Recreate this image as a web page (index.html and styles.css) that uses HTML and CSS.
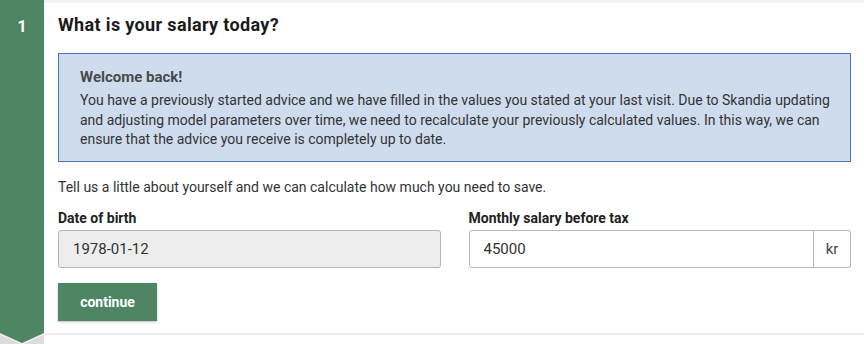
FILE: index.html
```html
<!DOCTYPE html>
<html lang="en">
<head>
<meta charset="utf-8">
<link rel="stylesheet" href="styles.css">
</head>
<body>
<div class="step">
  <div class="rail"><span class="num">1</span></div>
  <div class="main">
    <h1 class="title">What is your salary today?</h1>
    <div class="notice">
      <div class="notice-title">Welcome back!</div>
      <p class="notice-text">You have a previously started advice and we have filled in the values you stated at your last visit. Due to Skandia updating and adjusting model parameters over time, we need to recalculate your previously calculated values. In this way, we can ensure that the advice you receive is completely up to date.</p>
    </div>
    <p class="intro">Tell us a little about yourself and we can calculate how much you need to save.</p>
    <div class="fields">
      <div class="field">
        <label class="label">Date of birth</label>
        <div class="input disabled">1978-01-12</div>
      </div>
      <div class="field">
        <label class="label">Monthly salary before tax</label>
        <div class="input-group">
          <div class="input grow">45000</div>
          <div class="addon">kr</div>
        </div>
      </div>
    </div>
    <button class="btn">continue</button>
  </div>
  <div class="rail-foot">
    <svg width="44" height="11" viewBox="0 0 44 11"><polyline points="0,1 22,11 44,1" fill="none" stroke="#f2f2f2" stroke-width="1.2"/><polygon points="0,0 44,0 22,10" fill="#4e8563"/></svg>
  </div>
  <div class="foot"></div>
</div>
</body>
</html>
```
FILE: styles.css
```css
* { box-sizing: border-box; }
html, body { margin: 0; padding: 0; background: #fff; }
body { font-family: Roboto, "Liberation Sans", Arial, sans-serif; color: #333; font-size: 14px; width: 864px; height: 344px; overflow: hidden; }
.step { display: grid; grid-template-columns: 44px 1fr; grid-template-rows: 333px 11px; }
.rail { background: #4e8563; display: flex; justify-content: center; padding-top: 17px; }
.num { color: #fff; font-weight: 700; font-size: 16px; line-height: 20px; }
.main { border-top: 3px solid #f3f3f7; padding: 11px 13px 0 14px; }
.title { margin: 0; font-size: 18px; font-weight: 700; line-height: 22px; color: #1b1b1b; letter-spacing: 0.35px; }
.notice { margin-top: 17px; background: #cfdcee; border: 1px solid #4a76b8; padding: 13px 20px 11px 21px; }
.notice-title { font-weight: 700; color: #4a4a4a; line-height: 20px; font-size: 15px; }
.notice-text { margin: 4px 0 0; line-height: 19.5px; color: #333; }
.intro { margin: 15px 0 0; line-height: 20px; color: #333; }
.fields { display: grid; grid-template-columns: 1fr 1fr; gap: 28px; margin-top: 11px; }
.field { display: flex; flex-direction: column; }
.label { font-weight: 700; color: #222; line-height: 20px; margin-bottom: 2px; }
.input { height: 38px; border: 1px solid #b5b5b5; border-radius: 3px; padding: 0 14px; display: flex; align-items: center; color: #333; background: #fff; font-size: 15px; }
.input.disabled { background: #ededed; }
.input-group { display: flex; }
.input.grow { flex: 1; border-radius: 3px 0 0 3px; }
.addon { width: 37px; height: 38px; border: 1px solid #b5b5b5; border-left: none; border-radius: 0 3px 3px 0; display: flex; align-items: center; justify-content: center; color: #444; font-size: 15px; }
.btn { margin-top: 15px; width: 99px; height: 38px; background: #4e8563; color: #fff; font-family: inherit; font-weight: 700; font-size: 14px; border: none; box-shadow: 0 1px 2px rgba(0,0,0,0.25); }
.rail-foot { background: #dcdcdc; line-height: 0; }
.rail-foot svg { display: block; }
.foot { border-top: 2px solid #efeff1; background: #fff; }
```
